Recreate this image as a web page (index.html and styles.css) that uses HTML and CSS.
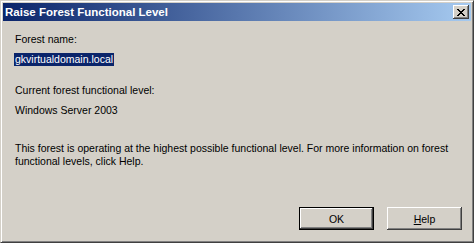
FILE: index.html
```html
<!DOCTYPE html>
<html>
<head>
<meta charset="utf-8">
<link rel="stylesheet" href="styles.css">
</head>
<body>
<div class="window">
  <div class="titlebar">
    <span class="title">Raise Forest Functional Level</span>
    <button class="close" aria-label="Close">
      <svg width="8" height="7" viewBox="0 0 8 7"><path d="M0 0h2v1h1v1h2V1h1V0h2v1H7v1H6v1H5v1h1v1h1v1h1v1H6V6H5V5H3v1H2v1H0V6h1V5h1V4h1V3H2V2H1V1H0z" fill="#000"/></svg>
    </button>
  </div>
  <div class="content">
    <div class="label first">Forest name:</div>
    <div class="field"><span class="selected">gkvirtualdomain.local</span></div>
    <div class="label current">Current forest functional level:</div>
    <div class="label level">Windows Server 2003</div>
    <p class="message">This forest is operating at the highest possible functional level. For more information on forest<br>functional levels, click Help.</p>
    <div class="buttons">
      <button class="btn default">OK</button>
      <button class="btn"><u>H</u>elp</button>
    </div>
  </div>
</div>
</body>
</html>
```

FILE: styles.css
```css
html, body {
  margin: 0;
  padding: 0;
  background: #d4d0c8;
}
.window {
  box-sizing: border-box;
  width: 474px;
  height: 243px;
  background: #d4d0c8;
  border-top: 1px solid #d4d0c8;
  border-left: 1px solid #d4d0c8;
  border-right: 1px solid #404040;
  border-bottom: 1px solid #404040;
  box-shadow: inset 1px 1px 0 #ffffff, inset -1px -1px 0 #808080;
  padding: 2px;
  display: flex;
  flex-direction: column;
  font-family: "Liberation Sans", Arial, sans-serif;
  font-size: 10.5px;
  color: #000;
}
.titlebar {
  height: 18px;
  flex: none;
  background: linear-gradient(to right, #0a246a, #a6caf0);
  display: flex;
  align-items: center;
  justify-content: space-between;
  padding: 0 2px 0 2px;
}
.title {
  color: #fff;
  font-weight: bold;
  font-size: 11.5px;
  line-height: 18px;
  white-space: nowrap;
}
.close {
  box-sizing: border-box;
  width: 16px;
  height: 14px;
  padding: 0;
  margin: 0;
  background: #d4d0c8;
  border: none;
  box-shadow: inset -1px -1px 0 #404040, inset 1px 1px 0 #ffffff, inset -2px -2px 0 #808080;
  display: flex;
  align-items: center;
  justify-content: center;
  padding-right: 1px;
}
.close svg { display: block; }
.content {
  flex: 1;
  padding: 0 0 0 12px;
  display: flex;
  flex-direction: column;
  align-items: flex-start;
}
.label {
  line-height: 13px;
  white-space: nowrap;
}
.first { margin-top: 12px; }
.field {
  margin-top: 7px;
  margin-left: -1px;
  line-height: 13px;
}
.selected {
  display: inline-block;
  background: #0a246a;
  color: #fff;
  padding: 0 1px;
  line-height: 13px;
}
.current { margin-top: 18px; }
.level { margin-top: 7px; }
.message {
  margin: 25px 0 0 0;
  line-height: 13px;
  white-space: nowrap;
}
.buttons {
  align-self: flex-end;
  margin-top: auto;
  margin-bottom: 10px;
  margin-right: 9px;
  display: flex;
  gap: 13px;
}
.btn {
  box-sizing: border-box;
  width: 75px;
  height: 23px;
  margin: 0;
  padding: 0;
  background: #d4d0c8;
  border: none;
  font-family: "Liberation Sans", Arial, sans-serif;
  font-size: 10.5px;
  color: #000;
  box-shadow: inset -1px -1px 0 #404040, inset 1px 1px 0 #ffffff, inset -2px -2px 0 #808080;
}
.btn.default {
  border: 1px solid #000;
  box-shadow: inset -1px -1px 0 #404040, inset 1px 1px 0 #ffffff, inset -2px -2px 0 #808080;
}
```
